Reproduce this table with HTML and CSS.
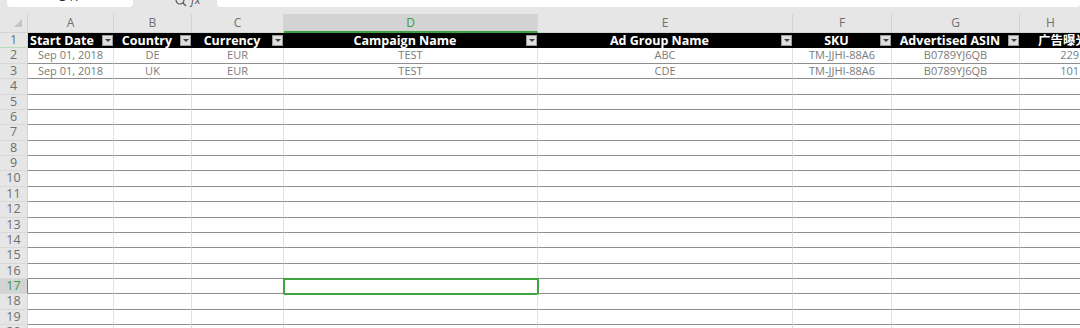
FILE: index.html
```html
<!DOCTYPE html>
<html>
<head>
<meta charset="utf-8">
<link rel="stylesheet" href="styles.css">
</head>
<body>
<div class="app">
  <div class="topbar">
    <div class="namebox">D17</div>
    <div class="fxarea">
      <svg class="zoom-ic" width="14" height="10" viewBox="0 0 14 10"><circle cx="5" cy="0" r="4" fill="none" stroke="#555" stroke-width="1.2"/><line x1="8" y1="3" x2="11" y2="6" stroke="#555" stroke-width="1.3"/></svg>
      <span class="fx">fx</span>
    </div>
    <div class="formula"></div>
  </div>
  <div class="sheet">
    <div class="corner"><svg width="10" height="10" viewBox="0 0 10 10"><polygon points="9,1 9,9 1,9" fill="#c4c4c4"/></svg></div>
    <div class="ch">A</div><div class="ch">B</div><div class="ch">C</div><div class="ch sel">D</div><div class="ch">E</div><div class="ch">F</div><div class="ch">G</div><div class="ch">H</div>

    <div class="rh r1">1</div>
    <div class="hd left"><span class="t">Start Date</span><span class="dd"></span></div>
    <div class="hd"><span class="t">Country</span><span class="dd"></span></div>
    <div class="hd"><span class="t">Currency</span><span class="dd"></span></div>
    <div class="hd"><span class="t">Campaign Name</span><span class="dd"></span></div>
    <div class="hd"><span class="t">Ad Group Name</span><span class="dd"></span></div>
    <div class="hd"><span class="t">SKU</span><span class="dd"></span></div>
    <div class="hd"><span class="t">Advertised ASIN</span><span class="dd"></span></div>
    <div class="hd cut"><span class="t">广告曝光量</span></div>

    <div class="rh">2</div><div class="c">Sep 01, 2018</div><div class="c">DE</div><div class="c">EUR</div><div class="c">TEST</div><div class="c">ABC</div><div class="c">TM-JJHI-88A6</div><div class="c">B0789YJ6QB</div><div class="c num">229</div>
    <div class="rh">3</div><div class="c">Sep 01, 2018</div><div class="c">UK</div><div class="c">EUR</div><div class="c">TEST</div><div class="c">CDE</div><div class="c">TM-JJHI-88A6</div><div class="c">B0789YJ6QB</div><div class="c num">101</div>
    <div class="rh">4</div><div class="c"></div><div class="c"></div><div class="c"></div><div class="c"></div><div class="c"></div><div class="c"></div><div class="c"></div><div class="c"></div>
    <div class="rh">5</div><div class="c"></div><div class="c"></div><div class="c"></div><div class="c"></div><div class="c"></div><div class="c"></div><div class="c"></div><div class="c"></div>
    <div class="rh">6</div><div class="c"></div><div class="c"></div><div class="c"></div><div class="c"></div><div class="c"></div><div class="c"></div><div class="c"></div><div class="c"></div>
    <div class="rh">7</div><div class="c"></div><div class="c"></div><div class="c"></div><div class="c"></div><div class="c"></div><div class="c"></div><div class="c"></div><div class="c"></div>
    <div class="rh">8</div><div class="c"></div><div class="c"></div><div class="c"></div><div class="c"></div><div class="c"></div><div class="c"></div><div class="c"></div><div class="c"></div>
    <div class="rh">9</div><div class="c"></div><div class="c"></div><div class="c"></div><div class="c"></div><div class="c"></div><div class="c"></div><div class="c"></div><div class="c"></div>
    <div class="rh">10</div><div class="c"></div><div class="c"></div><div class="c"></div><div class="c"></div><div class="c"></div><div class="c"></div><div class="c"></div><div class="c"></div>
    <div class="rh">11</div><div class="c"></div><div class="c"></div><div class="c"></div><div class="c"></div><div class="c"></div><div class="c"></div><div class="c"></div><div class="c"></div>
    <div class="rh">12</div><div class="c"></div><div class="c"></div><div class="c"></div><div class="c"></div><div class="c"></div><div class="c"></div><div class="c"></div><div class="c"></div>
    <div class="rh">13</div><div class="c"></div><div class="c"></div><div class="c"></div><div class="c"></div><div class="c"></div><div class="c"></div><div class="c"></div><div class="c"></div>
    <div class="rh">14</div><div class="c"></div><div class="c"></div><div class="c"></div><div class="c"></div><div class="c"></div><div class="c"></div><div class="c"></div><div class="c"></div>
    <div class="rh">15</div><div class="c"></div><div class="c"></div><div class="c"></div><div class="c"></div><div class="c"></div><div class="c"></div><div class="c"></div><div class="c"></div>
    <div class="rh">16</div><div class="c"></div><div class="c"></div><div class="c"></div><div class="c"></div><div class="c"></div><div class="c"></div><div class="c"></div><div class="c"></div>
    <div class="rh selr">17</div><div class="c"></div><div class="c"></div><div class="c"></div><div class="c active"></div><div class="c"></div><div class="c"></div><div class="c"></div><div class="c"></div>
    <div class="rh">18</div><div class="c"></div><div class="c"></div><div class="c"></div><div class="c"></div><div class="c"></div><div class="c"></div><div class="c"></div><div class="c"></div>
    <div class="rh">19</div><div class="c"></div><div class="c"></div><div class="c"></div><div class="c"></div><div class="c"></div><div class="c"></div><div class="c"></div><div class="c"></div>
    <div class="rh">20</div><div class="c"></div><div class="c"></div><div class="c"></div><div class="c"></div><div class="c"></div><div class="c"></div><div class="c"></div><div class="c"></div>
  </div>
</div>
</body>
</html>
```

FILE: styles.css
```css
html, body {
  margin: 0;
  padding: 0;
  background: #ffffff;
  overflow: hidden;
}
.app {
  width: 1080px;
  height: 328px;
  overflow: hidden;
  font-family: "Open Sans", "Noto Sans", "Noto Sans CJK SC", sans-serif;
}
.topbar {
  height: 14px;
  background: #e6e6e6;
  display: flex;
  align-items: flex-end;
  overflow: hidden;
}
.namebox {
  width: 126px;
  height: 24px;
  margin-left: 7px;
  margin-bottom: 7px;
  background: #ffffff;
  border-radius: 4px;
  box-sizing: border-box;
  text-align: center;
  font-size: 12px;
  line-height: 12px;
  padding-top: 8px;
  color: #333;
}
.fxarea {
  width: 84px;
  height: 14px;
  display: flex;
  align-items: flex-start;
  padding-left: 42px;
  box-sizing: border-box;
  gap: 2px;
}
.zoom-ic {
  display: block;
}
.fx {
  font-size: 12px;
  font-style: italic;
  color: #555;
  line-height: 12px;
  margin-top: -6px;
}
.formula {
  flex: 1;
  height: 24px;
  margin-bottom: 7px;
  background: #ffffff;
  border-radius: 4px;
}
.sheet {
  display: grid;
  grid-template-columns: 28px 86px 78px 92px 254px 255px 99px 128px 62px;
  grid-template-rows: 19px;
  grid-auto-rows: 15.375px;
}
.sheet > div {
  box-sizing: border-box;
  white-space: nowrap;
}
.corner {
  background: #e6e6e6;
  border-bottom: 1px solid #d4d4d4;
  border-right: 1px solid #d4d4d4;
  display: flex;
  align-items: flex-end;
  justify-content: flex-end;
  padding: 0 4px 4px 0;
}
.corner svg {
  display: block;
}
.ch {
  background: #e6e6e6;
  border-right: 1px solid #d4d4d4;
  border-bottom: 1px solid #d4d4d4;
  color: #707070;
  font-size: 12px;
  line-height: 18px;
  text-align: center;
}
.ch.sel {
  background: #d3d3d3;
  color: #3c9a3c;
  border-bottom: 2px solid #3fa03f;
}
.rh {
  background: #e6e6e6;
  border-right: 1px solid #d4d4d4;
  border-bottom: 1px solid #d8d8d8;
  color: #6e6e6e;
  font-size: 12.5px;
  line-height: 14px;
  text-align: center;
}
.rh.r1 {
  border-bottom: 1px solid #b9dcb9;
}
.rh.selr {
  background: #d3d3d3;
  color: #3c9a3c;
  border-right: 1px solid #3fa03f;
}
.hd {
  background: #000000;
  color: #ffffff;
  font-weight: 700;
  font-size: 12.5px;
  display: flex;
  align-items: center;
  line-height: 14px;
  overflow: hidden;
}
.hd .t {
  flex: 1;
  text-align: center;
}
.hd.left .t {
  text-align: left;
  padding-left: 2px;
}
.hd.cut .t {
  text-align: left;
  padding-left: 18px;
}
.dd {
  width: 11px;
  height: 11px;
  margin-right: 1px;
  box-sizing: border-box;
  background: #dedede;
  border: 1px solid #9a9a9a;
  position: relative;
  flex: none;
}
.dd::after {
  content: "";
  position: absolute;
  left: 2px;
  top: 3px;
  border-left: 3px solid transparent;
  border-right: 3px solid transparent;
  border-top: 3px solid #444;
}
.c {
  border-right: 1px solid #e0e0e0;
  border-bottom: 1px solid #8e8e8e;
  color: #7a7a7a;
  font-size: 11px;
  line-height: 14px;
  text-align: center;
  overflow: hidden;
}
.c.num {
  text-align: right;
  padding-right: 2px;
  color: #6f7f94;
}
.c.active {
  outline: 2px solid #3fa63f;
  outline-offset: -1px;
}
```
